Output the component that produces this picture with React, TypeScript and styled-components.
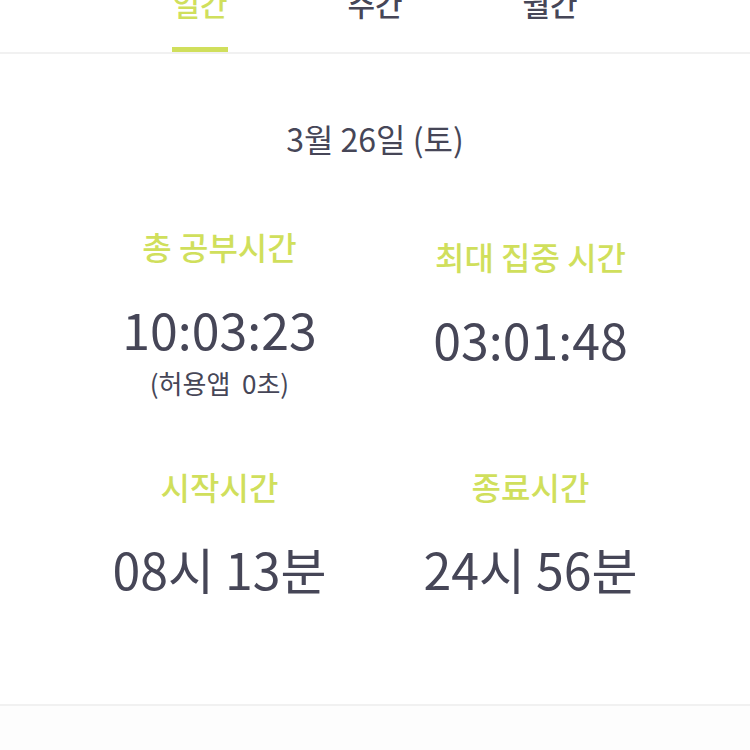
import React from 'react';
import styled, {createGlobalStyle} from 'styled-components';

const GREEN = '#d0df5c';
const INK = '#464657';

const GlobalStyle = createGlobalStyle`
  html, body {
    margin: 0;
    padding: 0;
    background: #ffffff;
    overflow: hidden;
  }
  body {
    font-family: "Noto Sans CJK KR", "Noto Sans", sans-serif;
    color: ${INK};
  }
`;

interface Stat {
    label: string;
    value: string;
    note?: string;
}

const stats: Stat[][] = [
    [
        {label: '총 공부시간', value: '10:03:23', note: '(허용앱  0초)'},
        {label: '최대 집중 시간', value: '03:01:48'},
    ],
    [
        {label: '시작시간', value: '08시 13분'},
        {label: '종료시간', value: '24시 56분'},
    ],
];

const tabs = ['일간', '주간', '월간'];

const App: React.FC = () => {
    return (
        <Page>
            <GlobalStyle/>
            <TabBar>
                {tabs.map((t, i) => (
                    <Tab key={t}>
                        <TabLabel $active={i === 0}>{t}</TabLabel>
                    </Tab>
                ))}
            </TabBar>
            <Summary>
                <DateTitle>3월 26일 (토)</DateTitle>
                {stats.map((row, r) => (
                    <StatRow key={r}>
                        {row.map(s => (
                            <StatCell key={s.label}>
                                <StatLabel>{s.label}</StatLabel>
                                <StatValue>{s.value}</StatValue>
                                {s.note && <StatNote>{s.note}</StatNote>}
                            </StatCell>
                        ))}
                    </StatRow>
                ))}
            </Summary>
            <Footer/>
        </Page>
    );
};

const Page = styled.div`
  width: 750px;
  height: 750px;
  display: flex;
  flex-direction: column;
  background: #ffffff;
`;

const TabBar = styled.div`
  display: flex;
  justify-content: center;
  margin-top: -18px;
  border-bottom: 2px solid #f1f1f1;
`;

const Tab = styled.div`
  width: 175px;
  display: flex;
  justify-content: center;
`;

const TabLabel = styled.span<{ $active: boolean }>`
  font-size: 30px;
  font-weight: 500;
  line-height: 42px;
  padding-bottom: 23px;
  color: ${p => (p.$active ? GREEN : INK)};
  border-bottom: 5px solid ${p => (p.$active ? GREEN : 'transparent')};
`;

const Summary = styled.div`
  flex: 1;
  display: flex;
  flex-direction: column;
  align-items: center;
  gap: 86px;
  border-bottom: 2px solid #f1f1f1;
`;

const DateTitle = styled.div`
  margin-top: 62px;
  margin-bottom: -20px;
  font-size: 32px;
  font-weight: 400;
  line-height: 44px;
  color: ${INK};
`;

const StatRow = styled.div`
  width: 622px;
  display: grid;
  grid-template-columns: 1fr 1fr;
  align-items: center;
`;

const StatCell = styled.div`
  display: flex;
  flex-direction: column;
  align-items: center;
`;

const StatLabel = styled.div`
  font-size: 32px;
  font-weight: 500;
  line-height: 40px;
  color: ${GREEN};
`;

const StatValue = styled.div`
  font-size: 50px;
  font-weight: 400;
  line-height: 64px;
  margin-top: 30px;
  color: ${INK};
`;

const StatNote = styled.div`
  font-size: 26px;
  line-height: 20px;
  margin-top: 13px;
  margin-bottom: -13px;
  white-space: pre;
  color: ${INK};
`;

const Footer = styled.div`
  height: 44px;
  background: #fdfdfd;
`;

export default App;
